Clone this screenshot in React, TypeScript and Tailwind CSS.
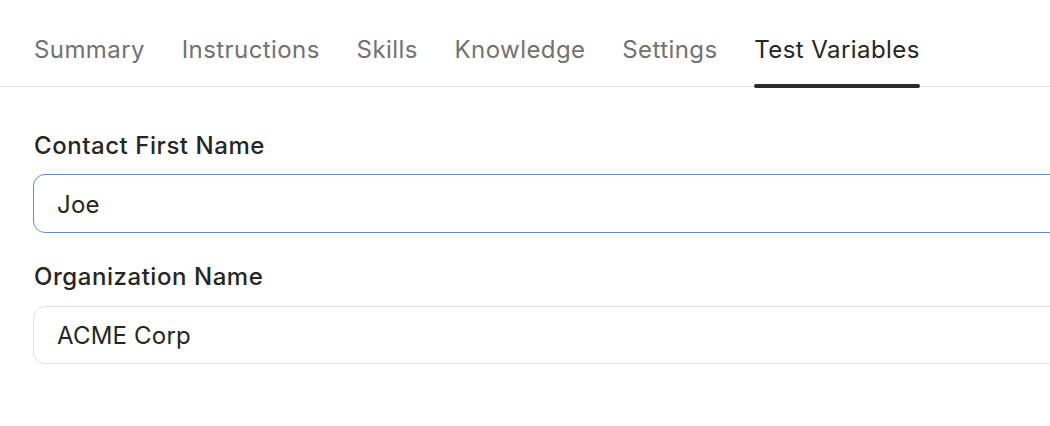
import React from "react";

const tabs = ["Summary", "Instructions", "Skills", "Knowledge", "Settings", "Test Variables"];

export default function App() {
  return (
    <div className="w-[1050px] h-[426px] bg-white overflow-hidden" style={{ fontFamily: "Inter, 'Noto Sans', sans-serif" }}>
      <div className="flex gap-[36.8px] pl-[34px] border-b border-[#e3e3e3] h-[87px]">
        {tabs.map((t) => {
          const active = t === "Test Variables";
          return (
            <div key={t} className="relative flex items-start pt-[34px]">
              <span className={`text-[24px] leading-[32px] tracking-[0.42px] ${active ? "text-[#262626]" : "text-[#727272]"}`}>{t}</span>
              {active && <div className="absolute left-0 right-0 bottom-[-2px] h-[4px] rounded-full bg-[#2b2b2b]" />}
            </div>
          );
        })}
      </div>
      <div className="pl-[33px] pt-[44px] flex flex-col">
        <label className="text-[24px] leading-[30px] font-medium tracking-[0.55px] text-[#262626] ml-[1px]">Contact First Name</label>
        <div className="mt-[13px] h-[59px] -mr-[20px] border border-[#5b8def] rounded-[12px] flex items-center pl-[23px] pt-[2px] text-[24px] tracking-[0.2px] text-[#262626]">Joe</div>
        <label className="mt-[29px] text-[24px] leading-[30px] font-medium tracking-[0.55px] text-[#262626] ml-[1px]">Organization Name</label>
        <div className="mt-[14px] h-[58px] -mr-[20px] border border-[#e2e2e2] rounded-[12px] flex items-center pl-[23px] pt-[2px] text-[24px] tracking-[0.2px] text-[#262626]">ACME Corp</div>
      </div>
    </div>
  );
}
